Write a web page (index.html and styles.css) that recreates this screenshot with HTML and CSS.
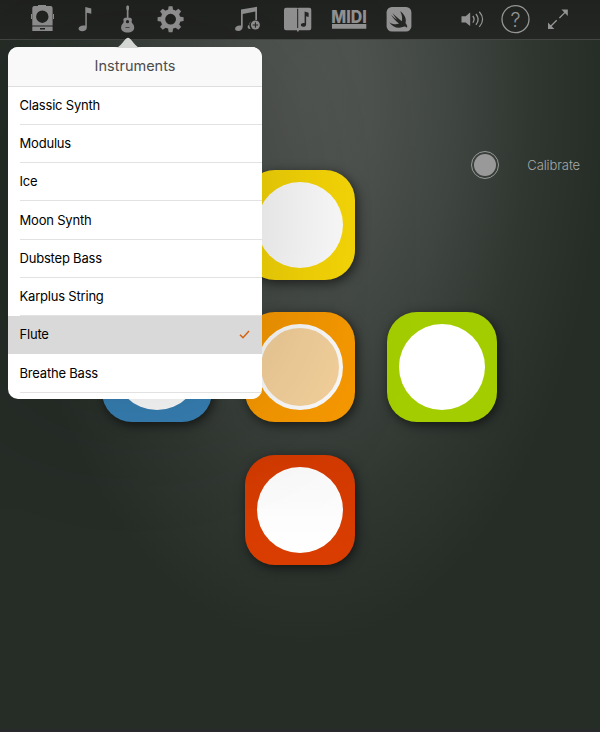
FILE: index.html
```html
<!DOCTYPE html>
<html lang="en">
<head>
<meta charset="utf-8">
<title>Instruments</title>
<link rel="stylesheet" href="styles.css">
</head>
<body>
<div class="app">
  <header class="toolbar">
    <div class="group group-main">
      <svg viewBox="20 0 43 39"><path fill-rule="evenodd" d="M34 6h17a2 2 0 0 1 1.600 2v17.600H32.300V8A2 2 0 0 1 34 6zM42.300 10.500a6.200 6.200 0 1 0 0 12.400a6.200 6.200 0 1 0 0-12.400z"/><path d="M31 14h1v5h-1zM53 14h1v5h-1zM38 5h8v1h-8z"/><path fill-rule="evenodd" d="M32.300 26.500h20.300V31H32.300zM40 28v1.500h5V28z"/></svg>
      <svg viewBox="63 0 43 39"><path d="M85.300 7l6 1.500v5.200l-4.500-.9v14.700c0 2.500-2 3.700-4.600 3.700-2.200 0-3.700-1-3.700-2.600 0-2.200 3-3.700 6.800-3z"/></svg>
      <svg viewBox="106 0 43 39"><path d="M127 5.500h1.300l.7 1v3.300h-.5v8c1.600-.4 3.300.2 3.400 1.700.1 1.500-.9 2.200.4 3.800 1.300 1.300 1.900 2.500 1.900 4.500 0 3-2.700 4.800-6.600 4.800s-6.500-1.800-6.500-4.800c0-2 .7-3.200 1.900-4.500 1.400-1.600.3-2.400.4-3.800.1-1.500 1.800-2.100 3.400-1.700v-8h-.5V6.500z"/><circle class="cut" cx="127.500" cy="21.700" r="1.600"/><path class="cut" d="M125.500 27h4v.7h-4z"/></svg>
      <svg viewBox="149 0 43 39"><g transform="translate(170.600 19.200)"><path id="tooth" d="M-2.600-9l.7-4h3.800l.7 4zM-2.600 9l.7 4h3.800l.7-4z"/><use href="#tooth" transform="rotate(45)"/><use href="#tooth" transform="rotate(90)"/><use href="#tooth" transform="rotate(135)"/><circle class="line gear-ring" r="7.700"/></g></svg>
    </div>
    <div class="group group-songs">
      <svg viewBox="222 0 51 39"><path d="M241 9.600l16-2.900v13.200h-1.700v-8.300l-12.600 2.300v12.900c0 2.600-1.900 4.200-4.400 4.200-2 0-3.200-1-3.200-2.300 0-2.200 2.800-3.700 5.900-3.100z"/><path d="M250.600 21.200c-1.700 2.300-1.700 5.400 0 7.700-2 .3-3.200-.8-2.900-2.300.2-1 1.100-1.700 2-1.800z"/><circle cx="255.400" cy="25" r="4.500"/><path class="line cut-line" d="M255.400 22.300v5.400M252.700 25h5.400"/></svg>
      <svg viewBox="273 0 51 39"><path fill-rule="evenodd" d="M286 7.700h11.300l.5 1 .5-1h11a2 2 0 0 1 2 2v18.500a2 2 0 0 1-2 2H299l-1.100 2-1.100-2H286a2 2 0 0 1-2-2V9.700a2 2 0 0 1 2-2z"/><path class="line cut-line" d="M297.700 9v19"/><path class="cut" d="M304.600 11.500l4 1.200v4.200l-2.500-.7v8.200c0 1.500-1.300 2.300-2.900 2.300-1.400 0-2.300-.7-2.300-1.700 0-1.400 1.800-2.200 3.700-1.800z"/></svg>
      <svg viewBox="324 0 51 39"><text class="midi" x="331.300" y="22.700" textLength="35.500" lengthAdjust="spacingAndGlyphs">MIDI</text><path d="M332 24h34.300v4.700H332z"/></svg>
      <svg viewBox="375 0 51 39"><rect x="386.600" y="7" width="24.800" height="24.500" rx="5.300"/><path class="cut" d="M400.300 11.200c4.600 3.500 6.400 7.900 5.200 11.700 1.600 1.900 2.100 3.600 1.500 4.900-1.500-1.500-2.800-1.600-4.500-.8-4.700 2-10.300-.2-13.300-4.800 3.300 2.200 7 2.700 9.800 1.300-3.500-2.800-6.100-5.800-8-8.800 2.600 2.500 4.800 4.200 6.400 5.200-2-2.200-3.700-4.600-5-6.800 3 3.100 6 5.800 9.400 8.200 .8-3.200.2-6.500-1.500-9.900z"/></svg>
    </div>
    <div class="group group-view">
      <svg viewBox="451 0 43 39"><path d="M461.500 16.200h4.200l4-3.400h.5v13h-.5l-4-3.400h-4.200z"/><path class="line" d="M472.800 16c1.600 2 1.600 4.500 0 6.700M475.900 14c2.900 3.400 2.900 7.400 0 10.700M479.300 11.700c4.300 4.700 4.300 10.500 0 15.200"/></svg>
      <svg viewBox="494 0 43 39"><circle class="line" cx="515.500" cy="19.200" r="13.500"/><text class="question" x="515.500" y="26.500">?</text></svg>
      <svg viewBox="537 0 43 39"><path d="M561.500 9.600h6.300v6.300zM548 22.600v6.300h6.300z"/><path class="line" d="M566 11.400L559.400 18M550 27l6.700-6.700"/></svg>
    </div>
  </header>

  <main class="stage">
    <div class="calibrate"><span class="record"></span><span>Calibrate</span></div>
    <div class="pads">
      <div class="pad yellow"><span class="disc"></span></div>
      <div class="pad blue"><span class="disc"></span></div>
      <div class="pad orange"><span class="disc"></span></div>
      <div class="pad green"><span class="disc"></span></div>
      <div class="pad red"><span class="disc"></span></div>
    </div>
  </main>
  <div class="bottom-edge"></div>

  <section class="popover">
    <svg class="arrow" viewBox="0 0 28 11"><path d="M0 11C5 11 6.500 8 10.500 3.300 13-.1 15-.1 17.500 3.300 21.500 8 23 11 28 11z"/></svg>
    <div class="sheet">
      <h1 class="title">Instruments</h1>
      <ul class="list">
        <li>Classic Synth</li>
        <li>Modulus</li>
        <li>Ice</li>
        <li>Moon Synth</li>
        <li>Dubstep Bass</li>
        <li>Karplus String</li>
        <li class="selected">Flute<svg class="check" viewBox="0 0 11 9"><path d="M1 4.700l3 3L10 1"/></svg></li>
        <li>Breathe Bass</li>
      </ul>
    </div>
  </section>
</div>
</body>
</html>
```

FILE: styles.css
```css
* { box-sizing: border-box; }

body {
  margin: 0;
  font-family: Inter, "Liberation Sans", sans-serif;
}

.app {
  position: relative;
  display: flex;
  flex-direction: column;
  width: 600px;
  height: 732px;
  overflow: hidden;
  background: radial-gradient(ellipse 300px 550px at 305px 95px, #525652 0%, #4d524e 22%, #3f4540 50%, #303731 75%, #262d27 100%);
}

.toolbar {
  display: flex;
  flex: none;
  height: 40px;
  padding-left: 20px;
  border-bottom: 1px solid #444844;
  background: linear-gradient(#20221f, #242623);
}

.group { display: flex; }
.group svg { width: 43px; height: 39px; fill: #929292; }
.group-songs { margin-left: 30px; }
.group-songs svg { width: 51px; }
.group-view { margin-left: 25px; }

.group .cut { fill: #242623; }
.group .line { fill: none; stroke: #969696; stroke-width: 1.3; }
.group .gear-ring { stroke-width: 4.6; }
.group .cut-line { stroke: #242623; stroke-width: 1; }
.midi { font-size: 17.500px; font-weight: 800; }
.question { font-size: 20px; font-weight: 300; text-anchor: middle; }

.stage { flex: 1; }

.calibrate {
  display: flex;
  align-items: center;
  justify-content: flex-end;
  gap: 28px;
  height: 28px;
  margin-top: 111px;
  padding-right: 20px;
  color: #a7aaa7;
  font-size: 13px;
  font-weight: 300;
  letter-spacing: -.1px;
}

.record {
  width: 28px;
  height: 28px;
  padding: 2px;
  border: 1.300px solid #999;
  border-radius: 50%;
  background: #999 content-box;
}

.pads {
  display: grid;
  grid-template-columns: repeat(3, 110px);
  grid-template-rows: repeat(3, 110px);
  gap: 32.500px;
  margin: -9.500px 0 0 102.300px;
}

.pad {
  display: flex;
  align-items: center;
  justify-content: center;
  border-radius: 30px;
  box-shadow: 2px 3px 12px rgba(0, 0, 0, .6);
}

.disc {
  width: 86px;
  height: 86px;
  border-radius: 50%;
  background: #fff;
}

.yellow { grid-area: 1 / 2; background: #f6d607; }
.blue { grid-area: 2 / 1; background: #3781b5; }
.orange { grid-area: 2 / 2; background: #f69800; }
.green { grid-area: 2 / 3; background: #a4cd00; }
.red { grid-area: 3 / 2; background: linear-gradient(#d23a00, #da3d00); }
.yellow .disc { background: #fcfcfc; }
.red .disc { background: linear-gradient(#f9f9f9, #fff); }
.orange .disc { border: 4.500px solid #fafafa; background: #f3d09b; }

.bottom-edge { flex: none; height: 3px; background: #27292a; }

.popover {
  position: absolute;
  top: 47px;
  left: 8px;
  width: 254px;
  height: 351.500px;
  border-radius: 10px;
  box-shadow: 0 0 160px rgba(0, 0, 0, .2);
}

.arrow {
  position: absolute;
  top: -10.500px;
  left: 105.500px;
  width: 28px;
  height: 11px;
  fill: #d3d6d3;
}

.sheet {
  height: 100%;
  overflow: hidden;
  border-radius: 10px;
  background: #fff;
}

.title {
  height: 39.500px;
  margin: 0;
  border-bottom: 1px solid #dedede;
  background: #f9f9f9;
  color: #4c4c4c;
  font-size: 14.500px;
  font-weight: 400;
  line-height: 37.500px;
  text-align: center;
}

.list { margin: 0; padding: 0; list-style: none; }

.list li {
  display: flex;
  align-items: center;
  justify-content: space-between;
  height: 38.250px;
  padding: 0 12px 1.500px 11.500px;
  background: linear-gradient(#e2e2e2, #e2e2e2) 12px 100% / 100% 1px no-repeat;
  font-size: 13px;
  letter-spacing: -.2px;
}

.list .selected { background: #d9d9d9; }

.check {
  width: 11px;
  height: 9px;
  fill: none;
  stroke: #d56413;
  stroke-width: 1.600;
}
```
